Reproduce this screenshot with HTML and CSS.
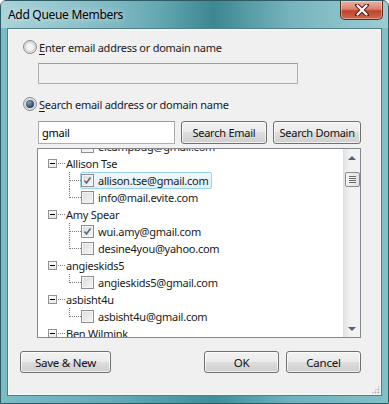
FILE: index.html
```html
<!DOCTYPE html>
<html lang="en">
<head>
    <meta charset="UTF-8">
    <title>Add Queue Members</title>
    <link rel="stylesheet" href="styles.css">
</head>
<body>
    <div class="window">
        <div class="titlebar">
            <span class="title">Add Queue Members</span>
            <div class="close">
                <svg width="16" height="12" viewBox="0 0 16 12">
                    <path d="M3 1 L13 11 M13 1 L3 11" stroke="#5a1a10" stroke-width="4" stroke-linecap="round"/>
                    <path d="M3.5 1.5 L12.5 10.5 M12.5 1.5 L3.5 10.5" stroke="#fff" stroke-width="2.2" stroke-linecap="round"/>
                </svg>
            </div>
        </div>

        <div class="client">
            <label class="option">
                <span class="radio"></span>
                <span><u>E</u>nter email address or domain name</span>
            </label>
            <div class="field wide"></div>

            <label class="option second">
                <span class="radio checked"></span>
                <span><u>S</u>earch email address or domain name</span>
            </label>
            <div class="search-row">
                <div class="field search">gmail</div>
                <div class="btn email-btn">Search Email</div>
                <div class="btn domain-btn">Search Domain</div>
            </div>

            <div class="tree">
                <div class="tree-view">
                    <div class="tree-items">
                        <div class="row child last">
                            <span class="link"></span><span class="check"></span><span class="label">elcampbug@gmail.com</span>
                        </div>
                        <div class="row parent">
                            <span class="expander"></span><span class="dash"></span><span class="label">Allison Tse</span>
                        </div>
                        <div class="row child">
                            <span class="link"></span>
                            <span class="selected"><span class="check checked"></span><span class="label">allison.tse@gmail.com</span></span>
                        </div>
                        <div class="row child last">
                            <span class="link"></span><span class="check"></span><span class="label">info@mail.evite.com</span>
                        </div>
                        <div class="row parent">
                            <span class="expander"></span><span class="dash"></span><span class="label">Amy Spear</span>
                        </div>
                        <div class="row child">
                            <span class="link"></span><span class="check checked"></span><span class="label">wui.amy@gmail.com</span>
                        </div>
                        <div class="row child last">
                            <span class="link"></span><span class="check"></span><span class="label">desine4you@yahoo.com</span>
                        </div>
                        <div class="row parent">
                            <span class="expander"></span><span class="dash"></span><span class="label">angieskids5</span>
                        </div>
                        <div class="row child last">
                            <span class="link"></span><span class="check"></span><span class="label">angieskids5@gmail.com</span>
                        </div>
                        <div class="row parent">
                            <span class="expander"></span><span class="dash"></span><span class="label">asbisht4u</span>
                        </div>
                        <div class="row child last">
                            <span class="link"></span><span class="check"></span><span class="label">asbisht4u@gmail.com</span>
                        </div>
                        <div class="row parent">
                            <span class="expander"></span><span class="dash"></span><span class="label">Ben Wilmink</span>
                        </div>
                    </div>
                </div>
                <div class="scrollbar">
                    <span class="arrow up"></span>
                    <span class="thumb"><i></i><i></i><i></i><i></i></span>
                    <span class="track"></span>
                    <span class="arrow down"></span>
                </div>
            </div>

            <div class="footer">
                <div class="btn save-btn">Save &amp; New</div>
                <div class="btn ok-btn">OK</div>
                <div class="btn cancel-btn">Cancel</div>
            </div>
            <span class="grip"></span>
        </div>
    </div>
</body>
</html>
```

FILE: styles.css
```css
/* Dialog frame */
* {
    margin: 0;
    padding: 0;
    box-sizing: border-box;
}

body {
    width: 389px;
    height: 404px;
    overflow: hidden;
    font-family: 'Noto Sans', 'DejaVu Sans', sans-serif;
    font-size: 11px;
    letter-spacing: -0.25px;
    color: #000;
    background: #fff;
}

.window {
    width: 389px;
    height: 404px;
    display: flex;
    flex-direction: column;
    border: 1px solid #2d5a63;
    border-radius: 6px 6px 0 0;
    background: linear-gradient(90deg, #7bbcc6 0%, #63aab5 30%, #3f8e9a 55%, #6db2bc 75%, #82c0c9 100%);
    padding: 0 6px 7px;
}

/* Title bar */
.titlebar {
    height: 27px;
    display: flex;
    align-items: flex-start;
    background: linear-gradient(90deg, rgba(255,255,255,0.35) 0%, rgba(255,255,255,0.1) 40%, rgba(0,0,0,0.05) 55%, rgba(255,255,255,0.2) 100%);
    margin: 0 -6px;
    padding: 0 6px;
}

.title {
    padding: 5px 0 0 1px;
    font-size: 12px;
    letter-spacing: -0.3px;
    color: #000;
    text-shadow: 0 0 6px rgba(255, 255, 255, 0.8);
}

.close {
    margin-left: auto;
    margin-right: -1px;
    width: 43px;
    height: 19px;
    display: flex;
    align-items: center;
    justify-content: center;
    border: 1px solid #5e2a22;
    border-top: none;
    border-radius: 0 0 5px 5px;
    background: linear-gradient(#e9b3a6 0%, #d9826f 45%, #c2412c 55%, #cf6a4f 100%);
    box-shadow: inset 0 0 0 1px rgba(255, 255, 255, 0.35);
}

/* Client area */
.client {
    flex: 1;
    position: relative;
    background: #f0f0f0;
    border: 1px solid #4f7e87;
    box-shadow: inset 0 0 0 1px #f8f8f8;
    padding: 10px 20px 0 12px;
    display: flex;
    flex-direction: column;
}

.option {
    height: 16px;
    margin-left: 3px;
    display: flex;
    align-items: center;
    gap: 2px;
    color: #1a1a1a;
}

.option.second {
    margin-top: 12px;
}

.option u {
    text-decoration: underline;
    text-underline-offset: 2px;
}

.radio {
    width: 14px;
    height: 14px;
    border-radius: 50%;
    border: 1px solid #8a8b8b;
    background: radial-gradient(circle at 50% 50%, #f4f4f4 0 3px, #d6d6d6 5px, #eeeeee 7px);
    display: flex;
    align-items: center;
    justify-content: center;
}

.radio.checked::after {
    content: "";
    width: 8px;
    height: 8px;
    border-radius: 50%;
    background: radial-gradient(circle at 40% 35%, #8aa4c0 0, #2f4f72 60%, #1c3553 100%);
}

.field {
    background: #fff;
    border: 1px solid #abadb3;
    border-top-color: #999ba0;
    height: 21px;
}

.field.wide {
    width: 260px;
    margin: 8px 0 0 18px;
    background: #f0f0f0;
}

.search-row {
    margin: 9px 0 0 18px;
    display: flex;
    gap: 6px;
    height: 23px;
    white-space: nowrap;
}

.field.search {
    width: 137px;
    height: 23px;
    padding: 3px 0 0 3px;
    font-size: 11px;
    color: #000;
}

.btn {
    height: 23px;
    display: flex;
    align-items: center;
    justify-content: center;
    border: 1px solid #707070;
    border-radius: 3px;
    background: linear-gradient(#f2f2f2 0%, #ebebeb 49%, #dddddd 50%, #cfcfcf 100%);
    box-shadow: inset 0 0 0 1px rgba(255, 255, 255, 0.7);
    color: #111;
    white-space: nowrap;
}

.email-btn {
    width: 87px;
}

.domain-btn {
    width: 88px;
}

/* Tree view */
.tree {
    margin: 4px 0 0 17px;
    height: 190px;
    border: 1px solid #828790;
    background: #fff;
    display: flex;
}

.tree-view {
    flex: 1;
    overflow: hidden;
}

.tree-items {
    margin-top: -11px;
}

.row {
    height: 17px;
    display: flex;
    align-items: center;
    white-space: nowrap;
}

.row.parent {
    padding-left: 10px;
}

.expander {
    width: 9px;
    height: 9px;
    border: 1px solid #919191;
    background: linear-gradient(#fff, #e6e6e6);
    display: flex;
    align-items: center;
    justify-content: center;
}

.expander::after {
    content: "";
    width: 5px;
    height: 1px;
    background: #000;
}

.dash {
    width: 7px;
    margin: 0 1px;
    border-top: 1px dotted #7a7a7a;
}

.row.child {
    padding-left: 31px;
}

.link {
    width: 12px;
    height: 17px;
    position: relative;
}

.link::before {
    content: "";
    position: absolute;
    left: 0;
    top: 0;
    bottom: 0;
    border-left: 1px dotted #7a7a7a;
}

.row.last .link::before {
    bottom: 8px;
}

.link::after {
    content: "";
    position: absolute;
    left: 1px;
    right: 0;
    top: 8px;
    border-top: 1px dotted #7a7a7a;
}

.check {
    width: 13px;
    height: 13px;
    margin-right: 4px;
    border: 1px solid #8f8f8f;
    background: linear-gradient(135deg, #dcdcdc, #f6f6f6);
    box-shadow: inset 0 0 0 1px #f4f4f4;
    flex-shrink: 0;
}

.check.checked {
    background-image: url("data:image/svg+xml,%3Csvg xmlns='http://www.w3.org/2000/svg' width='11' height='11'%3E%3Cpath d='M2.5 5.5 L4.5 8 L8.5 2.5' fill='none' stroke='%23556a80' stroke-width='1.6'/%3E%3C/svg%3E"), linear-gradient(135deg, #dcdcdc, #f6f6f6);
}

.selected {
    display: flex;
    align-items: center;
    height: 17px;
    margin-left: -1px;
    padding-right: 2px;
    border: 1px solid #99d1ef;
    border-radius: 2px;
    background: linear-gradient(#f1f8fd, #e0f0fb);
}

.label {
    font-size: 11px;
    color: #1a1a1a;
}

/* Scrollbar */
.scrollbar {
    width: 17px;
    background: linear-gradient(90deg, #e4e4e4, #f2f2f2 40%, #f2f2f2);
    border-left: 1px solid #e0e0e0;
    display: flex;
    flex-direction: column;
    align-items: center;
}

.arrow {
    width: 17px;
    height: 17px;
    display: flex;
    align-items: center;
    justify-content: center;
}

.arrow::after {
    content: "";
    border-left: 4px solid transparent;
    border-right: 4px solid transparent;
}

.arrow.up::after {
    border-bottom: 4px solid #4d6185;
}

.arrow.down::after {
    border-top: 4px solid #4d6185;
}

.thumb {
    width: 15px;
    height: 15px;
    margin-top: 6px;
    border: 1px solid #8a8a8a;
    border-radius: 2px;
    background: linear-gradient(90deg, #f3f3f3, #e2e2e2);
    display: flex;
    flex-direction: column;
    align-items: center;
    justify-content: center;
    gap: 1px;
}

.thumb i {
    width: 7px;
    height: 1px;
    background: #6e6e6e;
}

.track {
    flex: 1;
}

/* Footer buttons */
.footer {
    margin-top: 13px;
    display: flex;
    gap: 7px;
}

.footer .btn {
    height: 22px;
    font-size: 11.5px;
}

.save-btn {
    width: 91px;
}

.ok-btn {
    width: 75px;
    margin-left: auto;
}

.cancel-btn {
    width: 75px;
}

.grip {
    position: absolute;
    right: 1px;
    bottom: 1px;
    width: 9px;
    height: 9px;
    background:
        radial-gradient(circle, #b5b5b5 0.8px, transparent 1.2px) 0 0 / 3px 3px;
    clip-path: polygon(100% 0, 100% 100%, 0 100%);
}
```
